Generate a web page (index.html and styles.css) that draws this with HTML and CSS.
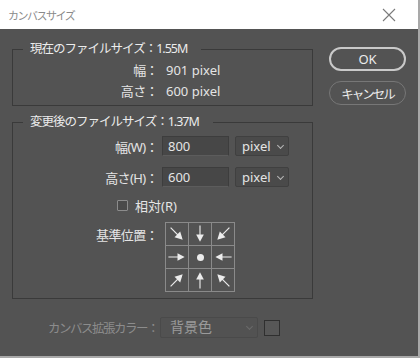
FILE: index.html
```html
<!DOCTYPE html>
<html lang="ja">
<head>
<meta charset="UTF-8">
<title>カンバスサイズ</title>
<link rel="stylesheet" href="styles.css">
</head>
<body>

<div class="dialog">

<div class="titlebar">
    <span class="title">カンバスサイズ</span>
    <svg class="close" width="14" height="14" viewBox="0 0 14 14">
        <path d="M1 1L13 13M13 1L1 13" stroke="#7a7a7a" stroke-width="1.1" fill="none"/>
    </svg>
</div>

<div class="main">

<div class="left">

<fieldset class="group current">
    <legend>現在のファイルサイズ：1.55M</legend>
    <div class="info-row">
        <span class="label">幅：</span>
        <span class="value">901 pixel</span>
    </div>
    <div class="info-row">
        <span class="label">高さ：</span>
        <span class="value">600 pixel</span>
    </div>
</fieldset>

<fieldset class="group resized">
    <legend>変更後のファイルサイズ：1.37M</legend>

    <div class="field-row">
        <span class="label">幅(W)：</span>
        <div class="input">800</div>
        <div class="select">pixel<span class="chev"></span></div>
    </div>

    <div class="field-row">
        <span class="label">高さ(H)：</span>
        <div class="input">600</div>
        <div class="select">pixel<span class="chev"></span></div>
    </div>

    <div class="check-row">
        <span class="checkbox"></span>
        <span>相対(R)</span>
    </div>

    <div class="anchor-row">
        <span class="label">基準位置：</span>
        <div class="anchor">
            <div class="cell"><svg class="arrow r-nw" viewBox="0 0 23 23"><use href="#arr"/></svg></div>
            <div class="cell"><svg class="arrow r-n" viewBox="0 0 23 23"><use href="#arr"/></svg></div>
            <div class="cell"><svg class="arrow r-ne" viewBox="0 0 23 23"><use href="#arr"/></svg></div>
            <div class="cell"><svg class="arrow r-w" viewBox="0 0 23 23"><use href="#arr"/></svg></div>
            <div class="cell"><span class="dot"></span></div>
            <div class="cell"><svg class="arrow r-e" viewBox="0 0 23 23"><use href="#arr"/></svg></div>
            <div class="cell"><svg class="arrow r-sw" viewBox="0 0 23 23"><use href="#arr"/></svg></div>
            <div class="cell"><svg class="arrow r-s" viewBox="0 0 23 23"><use href="#arr"/></svg></div>
            <div class="cell"><svg class="arrow r-se" viewBox="0 0 23 23"><use href="#arr"/></svg></div>
        </div>
    </div>
</fieldset>

</div>

<div class="buttons">
    <button class="btn ok">OK</button>
    <button class="btn cancel">キャンセル</button>
</div>

</div>

<div class="extend">
    <span class="label">カンバス拡張カラー：</span>
    <div class="select dim">背景色<span class="chev"></span></div>
    <span class="swatch"></span>
</div>

</div>

<svg width="0" height="0" style="position:absolute">
    <defs>
        <g id="arr">
            <path d="M11.5 2.5V13" stroke="#ececec" stroke-width="1.2"/>
            <path d="M7.5 12H15.5L11.5 19.5Z" fill="#ececec"/>
        </g>
    </defs>
</svg>

</body>
</html>
```

FILE: styles.css
```css
*{
    box-sizing:border-box;
}

body{
    margin:0;
    font-family:"Noto Sans","Noto Sans CJK JP",sans-serif;
    font-size:13px;
    color:#e4e4e4;
    background:#535353;
}

.dialog{
    width:420px;
    height:358px;
    background:#535353;
    border-right:2px solid #a9a9a9;
    border-bottom:2px solid #a9a9a9;
}

.titlebar{
    height:29px;
    background:#fff;
    display:flex;
    align-items:center;
    justify-content:space-between;
    padding:0 22px 0 8px;
}

.title{
    font-size:11px;
    letter-spacing:-1.5px;
    color:#8a8a8a;
}

.main{
    display:flex;
    padding:12px 0 0 12px;
}

.left{
    width:301px;
}

.group{
    margin:0;
    padding:0;
    border:1px solid #3a3a3a;
}

.group legend{
    margin-left:10px;
    padding:0 14px 0 7px;
    line-height:16px;
    font-size:12.5px;
    letter-spacing:-1px;
    color:#ececec;
}

.current{
    padding:2px 0 4px;
}

.info-row{
    display:grid;
    grid-template-columns:145px auto;
    column-gap:8px;
    height:21px;
    align-items:center;
}

.label{
    text-align:right;
    letter-spacing:-0.6px;
}

.resized{
    margin-top:8px;
    padding:6px 0 6px;
}

.field-row{
    display:grid;
    grid-template-columns:145px 67px 56px;
    column-gap:4px;
    align-items:center;
    margin-bottom:11px;
}

.input{
    height:20px;
    background:#474747;
    border:1px solid #3d3d3d;
    border-bottom-color:#5c5c5c;
    padding:0 5px;
    line-height:18px;
}

.select{
    position:relative;
    height:20px;
    margin-left:2px;
    background:#4a4a4a;
    border:1px solid #404040;
    border-radius:2px;
    padding:0 6px;
    line-height:18px;
}

.chev{
    position:absolute;
    right:5px;
    top:6px;
    width:5px;
    height:5px;
    border-right:1px solid #b8b8b8;
    border-bottom:1px solid #b8b8b8;
    transform:rotate(45deg);
}

.check-row{
    display:flex;
    align-items:center;
    gap:7px;
    margin:-1px 0 0 104px;
    height:17px;
}

.checkbox{
    width:11px;
    height:11px;
    border:1px solid #8c8c8c;
    background:#4a4a4a;
    border-radius:1px;
}

.anchor-row{
    display:flex;
    align-items:flex-start;
    margin-top:8px;
}

.anchor-row .label{
    width:145px;
    margin-top:3px;
}

.anchor{
    margin-left:7px;
    display:grid;
    grid-template-columns:repeat(3,23px);
    grid-template-rows:repeat(3,23px);
    border-top:1px solid #8a8a8a;
    border-left:1px solid #8a8a8a;
}

.cell{
    border-right:1px solid #8a8a8a;
    border-bottom:1px solid #8a8a8a;
    display:flex;
    align-items:center;
    justify-content:center;
}

.arrow{
    width:22px;
    height:22px;
}

.r-n{ transform:rotate(0deg); }
.r-s{ transform:rotate(180deg); }
.r-w{ transform:rotate(-90deg); }
.r-e{ transform:rotate(90deg); }
.r-nw{ transform:rotate(-45deg) scale(1.05); }
.r-ne{ transform:rotate(45deg) scale(1.05); }
.r-sw{ transform:rotate(-135deg) scale(1.05); }
.r-se{ transform:rotate(135deg) scale(1.05); }

.dot{
    width:7px;
    height:7px;
    border-radius:50%;
    background:#ececec;
}

.buttons{
    display:flex;
    flex-direction:column;
    gap:10px;
    margin:6px 0 0 16px;
}

.btn{
    width:77px;
    height:24px;
    border-radius:12px;
    background:transparent;
    font-family:inherit;
    font-size:13px;
    color:#ececec;
    padding:0;
}

.ok{
    border:2px solid #c9c9c9;
}

.cancel{
    border:1.5px solid #777;
    font-size:12.5px;
    letter-spacing:-2px;
}

.extend{
    display:flex;
    align-items:center;
    margin-top:18px;
    padding-left:48px;
    height:21px;
}

.extend .label{
    color:#8c8c8c;
    font-size:12.5px;
    letter-spacing:-1.5px;
    white-space:nowrap;
    width:112px;
    text-align:left;
}

.select.dim{
    width:98px;
    height:21px;
    margin-left:0;
    color:#9a9a9a;
    font-size:14px;
    background:#525252;
    border-color:#4a4a4a;
    padding-left:9px;
}

.select.dim .chev{
    border-color:#6a6a6a;
}

.swatch{
    width:16px;
    height:16px;
    margin-left:6px;
    border:1px solid #2f2f2f;
    background:#575757;
}
```
